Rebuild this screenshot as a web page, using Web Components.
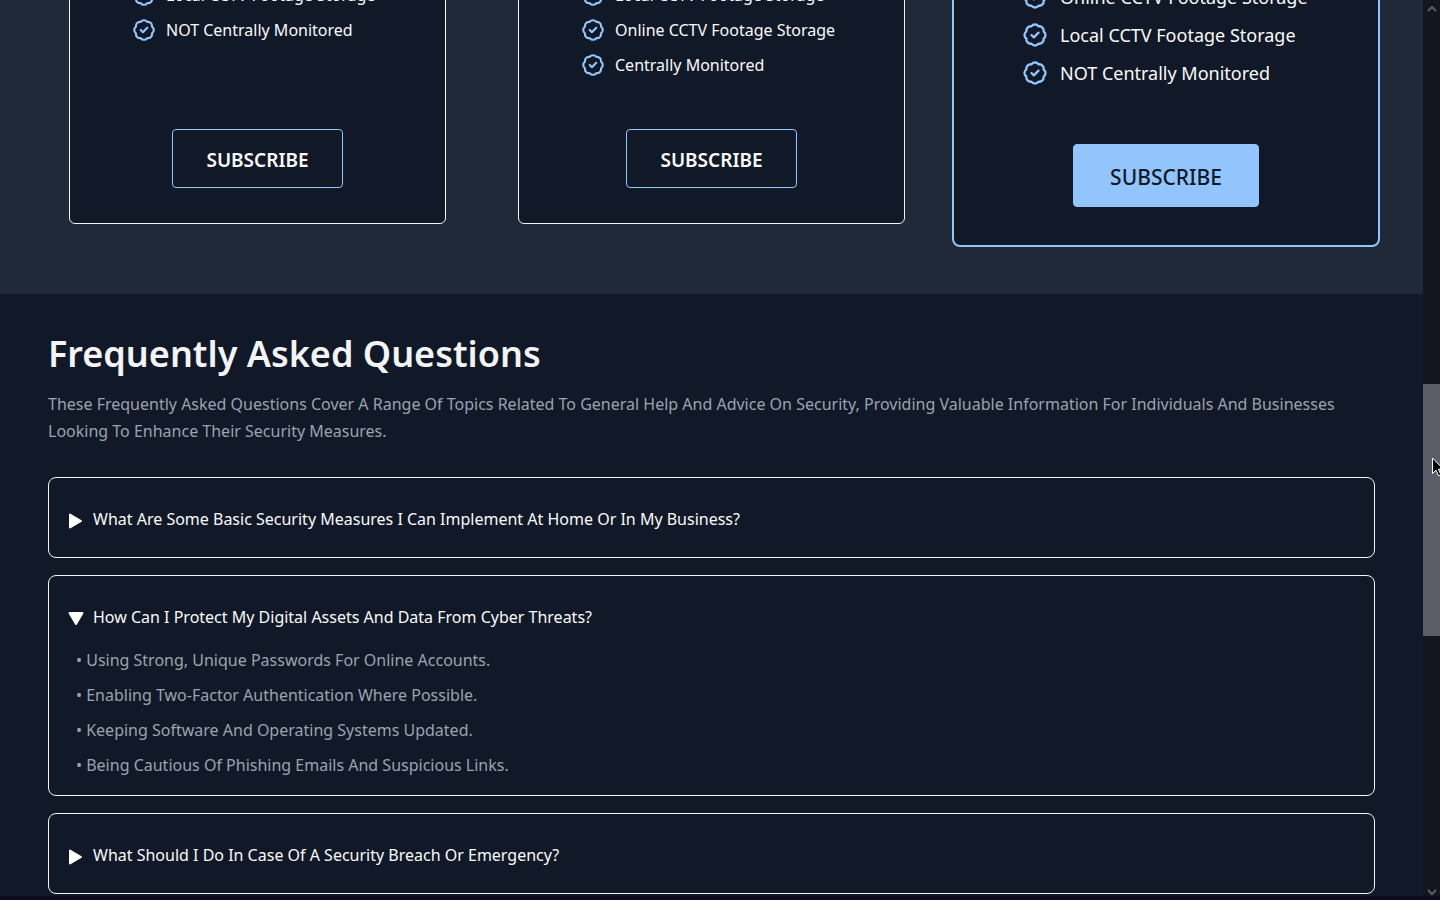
<!DOCTYPE html>
<html lang="en">
<head>
<meta charset="utf-8">
<title>Security plans and questions</title>
<style>
html, body { margin: 0; height: 100%; }
body { background: #111827; color: #f3f4f6; font-family: "Noto Sans", "Open Sans", sans-serif; font-size: 16px; }
</style>
</head>
<body>
<app-shell>
  <plan-section>
    <plan-card action="SUBSCRIBE">
      <plan-feature>Local CCTV Footage Storage</plan-feature>
      <plan-feature>NOT Centrally Monitored</plan-feature>
    </plan-card>
    <plan-card action="SUBSCRIBE">
      <plan-feature>Local CCTV Footage Storage</plan-feature>
      <plan-feature>Online CCTV Footage Storage</plan-feature>
      <plan-feature>Centrally Monitored</plan-feature>
    </plan-card>
    <plan-card action="SUBSCRIBE" featured>
      <plan-feature>Online CCTV Footage Storage</plan-feature>
      <plan-feature>Local CCTV Footage Storage</plan-feature>
      <plan-feature>NOT Centrally Monitored</plan-feature>
    </plan-card>
  </plan-section>
  <faq-section>
    <span slot="title">Frequently Asked Questions</span>
    <span slot="intro">These Frequently Asked Questions Cover A Range Of Topics Related To General Help And Advice On Security, Providing Valuable Information For Individuals And Businesses Looking To Enhance Their Security Measures.</span>
    <faq-item question="What Are Some Basic Security Measures I Can Implement At Home Or In My Business?"></faq-item>
    <faq-item open question="How Can I Protect My Digital Assets And Data From Cyber Threats?">
      <faq-point>Using Strong, Unique Passwords For Online Accounts.</faq-point>
      <faq-point>Enabling Two-Factor Authentication Where Possible.</faq-point>
      <faq-point>Keeping Software And Operating Systems Updated.</faq-point>
      <faq-point>Being Cautious Of Phishing Emails And Suspicious Links.</faq-point>
    </faq-item>
    <faq-item question="What Should I Do In Case Of A Security Breach Or Emergency?"></faq-item>
  </faq-section>
  <scroll-rail slot="rail"></scroll-rail>
</app-shell>

<script>
function define(name, html, setup) {
  const template = document.createElement('template');
  template.innerHTML = html;
  customElements.define(name, class extends HTMLElement {
    constructor() {
      super();
      this.attachShadow({ mode: 'open' }).append(template.content.cloneNode(true));
    }
    connectedCallback() { if (setup) setup(this, this.shadowRoot); }
  });
}

define('app-shell', `
<style>
:host { display: grid; grid-template-columns: minmax(0, 1fr) 17px; height: 100vh; overflow: hidden; border-bottom: 4px solid #0c0a1c; box-sizing: border-box; }
main { overflow: hidden; }
</style>
<main><slot></slot></main>
<slot name="rail"></slot>`);

define('plan-section', `
<style>
:host { display: flex; flex-direction: column; justify-content: flex-end; height: 294px; box-sizing: border-box; overflow: hidden; padding: 0 43px 47px 69px; background: #1f2937; }
div { display: grid; grid-template-columns: 377fr 72fr 387fr 47fr 428fr; align-items: end; }
::slotted(plan-card) { grid-column: 1; grid-row: 1; margin-bottom: 23px; }
::slotted(plan-card:nth-child(2)) { grid-column: 3; }
::slotted(plan-card[featured]) { grid-column: 5; margin-bottom: 0; }
</style>
<div><slot></slot></div>`);

define('plan-card', `
<style>
:host { display: block; box-sizing: border-box; background: #111827; color: #f9fafb; border: 1px solid #f3f4f6; border-radius: 6px; padding: 24px 0 35px; --icon: 26px; --row: 35px; --gap: 9px; font-size: 16px; }
:host([featured]) { border: 2px solid #93c5fd; border-radius: 8px; padding-bottom: 38px; --icon: 28px; --row: 38px; --gap: 11px; font-size: 18px; }
.features { min-height: calc(var(--row) * 3); padding-left: 61px; margin-bottom: 47px; }
:host([featured]) .features { padding-left: 67px; margin-bottom: 52px; }
button { display: block; margin: 0 auto; width: 171px; height: 59px; box-sizing: border-box; padding: 3px 0 0; border: 1px solid #93c5fd; border-radius: 4px; background: transparent; color: #f9fafb; font: 600 19px/27px "Noto Sans", "Open Sans", sans-serif; }
:host([featured]) button { width: 186px; height: 63px; background: #93c5fd; color: #111827; font-size: 21px; font-weight: 500; }
</style>
<div class="features" role="list"><slot></slot></div>
<button type="button"></button>`, (host, root) => {
  root.querySelector('button').textContent = host.getAttribute('action');
});

define('plan-feature', `
<style>
:host { display: flex; align-items: center; gap: var(--gap); height: var(--row); white-space: nowrap; line-height: 24px; }
svg { width: var(--icon); height: var(--icon); flex: none; fill: none; stroke: #93c5fd; stroke-width: 2; stroke-linecap: round; stroke-linejoin: round; }
</style>
<svg viewBox="0 0 24 24" aria-hidden="true"><path d="M21 12c0 1.268-.63 2.39-1.593 3.068a3.745 3.745 0 0 1-1.043 3.296 3.745 3.745 0 0 1-3.296 1.043A3.745 3.745 0 0 1 12 21c-1.268 0-2.39-.63-3.068-1.593a3.746 3.746 0 0 1-3.296-1.043 3.745 3.745 0 0 1-1.043-3.296A3.745 3.745 0 0 1 3 12c0-1.268.63-2.39 1.593-3.068a3.745 3.745 0 0 1 1.043-3.296 3.746 3.746 0 0 1 3.296-1.043A3.746 3.746 0 0 1 12 3c1.268 0 2.39.63 3.068 1.593a3.746 3.746 0 0 1 3.296 1.043 3.746 3.746 0 0 1 1.043 3.296A3.745 3.745 0 0 1 21 12z"/><path d="M9 12l2 2 4-4"/></svg>
<span><slot></slot></span>`, host => host.setAttribute('role', 'listitem'));

define('faq-section', `
<style>
:host { display: block; padding: 30px 48px; }
h2 { margin: 0 0 7px; font-size: 36px; line-height: 60px; font-weight: 600; color: #f3f4f6; }
p { margin: 0 0 32px; font-size: 16px; line-height: 27px; color: #9ca3af; }
.items { display: grid; gap: 17px; }
</style>
<h2><slot name="title"></slot></h2>
<p><slot name="intro"></slot></p>
<div class="items"><slot></slot></div>`);

define('faq-item', `
<style>
:host { display: block; }
details { border: 1px solid #f3f4f6; border-radius: 8px; }
summary { display: flex; align-items: center; gap: 8px; padding: 27px 18px 24px; line-height: 28px; list-style: none; color: #f9fafb; }
svg { width: 18px; height: 18px; flex: none; margin-top: 3px; fill: #fff; stroke: #fff; stroke-width: 2; stroke-linejoin: round; }
details[open] svg { transform: rotate(90deg); }
details[open] summary { padding-bottom: 12px; }
.points { padding: 0 27px 12px; color: #9ca3af; }
</style>
<details>
  <summary><svg viewBox="0 0 18 18" aria-hidden="true"><path d="M3 2.500v13l11-6.500z"/></svg><span></span></summary>
  <div class="points" role="list"><slot></slot></div>
</details>`, (host, root) => {
  root.querySelector('summary span').textContent = host.getAttribute('question');
  root.querySelector('details').open = host.hasAttribute('open');
});

define('faq-point', `
<style>:host { display: block; line-height: 35px; }</style>
• <slot></slot>`, host => host.setAttribute('role', 'listitem'));

define('scroll-rail', `
<style>
:host { display: grid; grid-template-rows: 17px 367fr 252fr 251fr 9px; justify-items: center; align-items: center; position: relative; background: #14161f; }
i { grid-row: 3; width: 17px; height: 100%; background: #5c5d66; }
svg { fill: none; stroke: #5c5d66; stroke-width: 2; }
.down { grid-row: 5; }
.pointer { position: absolute; right: -4px; top: 51%; fill: #000; stroke: #fff; stroke-width: 1; }
</style>
<svg width="10" height="8" viewBox="0 0 10 8" aria-hidden="true"><path d="M1 6l4-4 4 4"/></svg>
<i></i>
<svg class="down" width="10" height="8" viewBox="0 0 10 8" aria-hidden="true"><path d="M1 2l4 4 4-4"/></svg>
<svg class="pointer" width="12" height="20" viewBox="0 0 12 20" aria-hidden="true"><path d="M.5 1v15.500l3.500-3.400 2.500 5.700 2.400-1-2.500-5.600h5z"/></svg>`);
</script>
</body>
</html>
